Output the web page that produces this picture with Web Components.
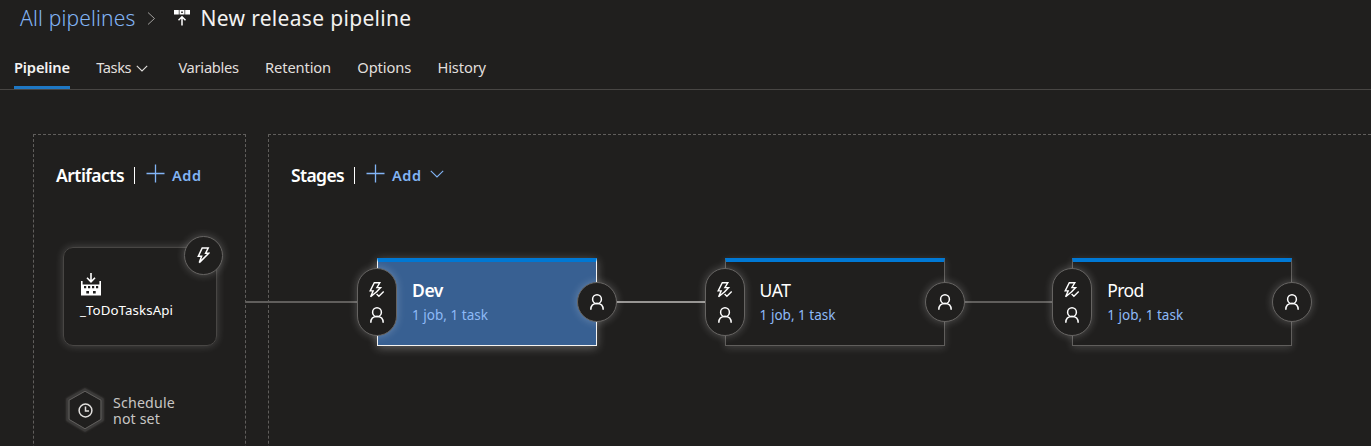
<!DOCTYPE html>
<html lang="en">
<head>
<meta charset="utf-8">
<title>New release pipeline</title>
<style>
body{margin:0;background:#201f1e;color:#fff;overflow:hidden;font-family:"Noto Sans","Open Sans",sans-serif}
</style>
</head>
<body>
<release-page></release-page>
<script>
const ICONS = {
  chevronRight: [9,13,'<path d="M1 .5 7.5 6.5 1 12.5" stroke-width="1"/>'],
  chevronDown: [12,7,'<path d="M.8 .8 6 6 11.200 .8" stroke-width="1.1"/>'],
  chevronDownWide: [14,8,'<path d="M.8 .8 7 7 13.200 .8" stroke-width="1.1"/>'],
  plus: [19,19,'<path d="M9.500 .5V18.500M.5 9.500H18.500" stroke-width="1.300"/>'],
  release: [16,16,'<path fill="currentColor" stroke="none" fill-rule="evenodd" d="M0 0H4.800V4.500H0ZM5.500 0H10.500V4.500H5.500ZM7.200 1.500V3.100H8.800V1.500ZM11.200 0H16V4.500H11.200Z"/><path d="M8 15.500V7M4.500 10.300 8 6.800 11.500 10.300" stroke-width="1.500"/>'],
  build: [20,23,'<path fill="currentColor" stroke="none" fill-rule="evenodd" d="M0 8H1.600V11.500H18.400V8H20V22.500H0ZM3 13V15.300H5.200V13ZM7 13V15.300H9.200V13ZM11 13V15.300H13.200V13ZM15 13V15.300H17.200V13ZM5.300 18V20.600H8V18ZM12 18V20.600H14.700V18Z"/><path d="M10 0V8.500M6 4.800 10 8.800 14 4.800" stroke-width="1.600"/>'],
  bolt: [13,17,'<path d="M5.200 1H11.200L8.600 6.200H11.800L2.300 15.600 4.600 9.300H1.300Z" stroke-width="1.500"/>'],
  boltCheck: [16,16,'<path d="M8.300 9.200 1.600 14.800 4.200 8.900H1.200L5.300 .8H10.800L7.900 5.600H11.600L7.200 10.300M7.600 12 9.900 14.200 14.700 9.600" stroke-width="1.400"/>'],
  person: [14,16,'<circle cx="7" cy="5.200" r="4.400"/><path d="M.8 15.700C.8 11.600 3.400 9.500 7 9.500S13.200 11.600 13.200 15.700"/>'],
  clock: [15,15,'<circle cx="7.500" cy="7.500" r="6.400"/><path d="M7.500 3.500V8H11"/>'],
  hexagon: [38,44,'<path d="M19 2 36 11.500V32L19 42 2 32V11.500Z" fill="#201f1e" stroke="#3b3a39" stroke-width="3"/><path d="M19 3.200 35 12.200V31.400L19 40.800 3 31.400V12.200Z" stroke="#605e5c" stroke-width="1"/>']
};

function define(name, css, html, ready){
  const template = document.createElement('template');
  template.innerHTML = `<style>${css}</style>${html}`;
  customElements.define(name, class extends HTMLElement{
    connectedCallback(){
      if(this.shadowRoot) return;
      this.attachShadow({mode:'open'}).append(template.content.cloneNode(true));
      if(ready) ready(this, this.shadowRoot);
    }
  });
}

define('ui-icon', `:host{display:block;flex:none;line-height:0}svg{display:block;fill:none;stroke:currentColor;stroke-width:1.500}`, `<span></span>`, (el, root) => {
  const [w,h,body] = ICONS[el.getAttribute('name')];
  root.querySelector('span').innerHTML = `<svg width="${w}" height="${h}" viewBox="0 0 ${w} ${h}" aria-hidden="true">${body}</svg>`;
});

/* A label tracked so that its run is exactly as wide as its width attribute.
   It is measured after every element is in place, with its final font. */
define('fit-label', `:host{display:block;flex:none;white-space:nowrap}span{display:inline-block;vertical-align:top}`, `<span><slot></slot></span>`, (el) => {
  el.style.width = el.getAttribute('width') + 'px';
});
function fitAll(root){
  for(const el of root.querySelectorAll('*')){
    if(el.localName === 'fit-label' && el.textContent){
      const run = el.shadowRoot.querySelector('span');
      run.style.letterSpacing = (+el.getAttribute('width') - run.getBoundingClientRect().width) / el.textContent.length + 'px';
    }
    if(el.shadowRoot) fitAll(el.shadowRoot);
  }
}

define('crumb-bar', `:host{display:flex;height:38px;padding-left:20px;box-sizing:border-box;align-items:flex-start;font-size:21px;line-height:27px}
fit-label{margin-top:5px}.root{color:#82b4f5;font-weight:300}.sep{color:#a19f9d;margin:12px 19px 0 11px}.kind{margin:10px 11px 0 -1px}.title{color:#f3f2f1}`,
`<fit-label class="root" width="115.5">All pipelines</fit-label><ui-icon class="sep" name="chevronRight"></ui-icon><ui-icon class="kind" name="release"></ui-icon><fit-label class="title" width="211">New release pipeline</fit-label>`);

define('tab-item', `:host{display:flex;height:51px;box-sizing:border-box;padding-top:19px;font-size:14.700px;line-height:20px;color:#e1dfdd;border-bottom:3px solid transparent}
:host([selected]){border-color:#1f78c4;font-weight:600;color:#f3f2f1}`, `<slot></slot>`);

define('tab-bar', `:host{display:flex;gap:26.200px;height:52px;box-sizing:border-box;padding-left:14px;border-bottom:1px solid #484644}`,
`<tab-item selected><fit-label width="56">Pipeline</fit-label></tab-item>
<tab-item><fit-label width="35">Tasks</fit-label><ui-icon name="chevronDown" style="margin:8px 0 0 5px"></ui-icon></tab-item>
<tab-item style="margin-left:4px"><fit-label width="60.5">Variables</fit-label></tab-item>
<tab-item><fit-label width="66">Retention</fit-label></tab-item>
<tab-item><fit-label width="54">Options</fit-label></tab-item>
<tab-item><fit-label width="48.5">History</fit-label></tab-item>`);

define('panel-heading', `:host{display:flex;height:26px;align-items:flex-start}
.title{font-size:17.500px;font-weight:600;line-height:26px;margin-top:-1px}.bar{width:1px;height:17px;background:#fff;margin:4px 11px 0 10px}
ui-icon,.add{color:#82b4f5}.add{font-size:14.500px;font-weight:600;line-height:26px;margin:-1px 0 0 7px}.more{margin:7px 0 0 8px}.plus{margin-top:1px}`,
`<fit-label class="title"></fit-label><div class="bar"></div><ui-icon class="plus" name="plus"></ui-icon><fit-label class="add" width="29.5">Add</fit-label>`,
(el, root) => {
  const old = root.querySelector('.title'), title = document.createElement('fit-label');
  title.className = 'title';
  title.textContent = el.getAttribute('label');
  title.setAttribute('width', el.getAttribute('width'));
  old.replaceWith(title);
  if(el.hasAttribute('menu')){
    const more = document.createElement('ui-icon');
    more.className = 'more';
    more.setAttribute('name','chevronDownWide');
    root.append(more);
  }
});

define('round-button', `:host{display:flex;flex-direction:column;gap:9px;align-items:center;justify-content:center;width:40px;height:40px;box-sizing:border-box;border:1px solid #666462;border-radius:20px;background:#201f1e;box-shadow:0 0 9px rgba(255,255,255,.24)}`, `<slot></slot>`);

define('artifact-card', `:host{display:block;position:relative;width:154px;height:99px;box-sizing:border-box;border:1px solid #484644;border-radius:10px;padding:25px 0 0 17px;box-shadow:0 0 9px rgba(255,255,255,.2)}
round-button{position:absolute;left:120px;top:-12px;width:39px;height:39px}fit-label{font-size:13.300px;line-height:20px;margin:4px 0 0 -1px}`,
`<ui-icon name="build"></ui-icon><fit-label width="93">_ToDoTasksApi</fit-label><round-button><ui-icon name="bolt"></ui-icon></round-button>`);

define('schedule-info', `:host{display:flex;align-items:center;gap:9px;color:#c8c6c4;font-size:14.200px;line-height:16px}
.mark{display:grid;place-items:center;filter:drop-shadow(0 0 1px #484644)}.mark>*{grid-area:1/1}.clock{color:#e1dfdd}.text{padding-top:2px}`,
`<div class="mark"><ui-icon name="hexagon"></ui-icon><ui-icon class="clock" name="clock"></ui-icon></div><div class="text"><fit-label width="62">Schedule</fit-label><fit-label width="47">not set</fit-label></div>`);

define('stage-card', `:host{display:block;flex:none;position:relative;width:220px;height:88px;box-sizing:border-box;border:1px solid #605e5c;border-top:4px solid #0078d4;padding:19px 0 0 34px;box-shadow:0 2px 8px rgba(255,255,255,.16)}
:host([active]){background:#386092;border-color:#0078d4 #f3f2f1 #f3f2f1;box-shadow:0 2px 9px rgba(255,255,255,.3)}
.pre{position:absolute;left:-21px;top:6px;height:68px}.post{position:absolute;right:-21px;top:20px}
.name{font-size:17.500px;line-height:24px;margin-top:-3px}:host([active]) .name{font-weight:600}
.jobs{font-size:13.500px;line-height:20px;margin-top:3px;color:#8ebaf7}`,
`<div class="name"></div><fit-label class="jobs" width="76">1 job, 1 task</fit-label>
<round-button class="pre"><ui-icon name="boltCheck"></ui-icon><ui-icon name="person"></ui-icon></round-button>
<round-button class="post"><ui-icon name="person"></ui-icon></round-button>`,
(el, root) => {
  const label = document.createElement('fit-label');
  label.setAttribute('width', el.getAttribute('width'));
  label.textContent = el.getAttribute('label');
  root.querySelector('.name').append(label);
});

define('flow-line', `:host{display:block;flex:none;align-self:center;width:127.600px;height:1.500px;background:#605e5c}:host([strong]){height:2px;background:#979593}`, ``);

define('pipeline-canvas', `:host{display:flex;gap:22px;padding:44px 0 0 33px;height:356px;box-sizing:border-box}
section{height:360px;box-sizing:border-box;border:1px dashed #605e5c;padding:28px 0 0 22px}
.artifacts{width:213px;flex:none}.stages{flex:1;min-width:0;border-right:0}
artifact-card{margin:58px 0 0 7px}schedule-info{margin:42px 0 0 10px}
.track{display:flex;margin:69px 0 0 -45px}`,
`<section class="artifacts"><panel-heading label="Artifacts" width="68"></panel-heading><artifact-card></artifact-card><schedule-info></schedule-info></section>
<section class="stages"><panel-heading label="Stages" width="53" menu></panel-heading>
<div class="track"><flow-line style="width:131px"></flow-line><stage-card active label="Dev" width="31"></stage-card><flow-line strong></flow-line><stage-card label="UAT" width="31"></stage-card><flow-line></flow-line><stage-card label="Prod" width="36.5"></stage-card></div></section>`);

define('release-page', `:host{display:block;height:446px;overflow:hidden}`, `<crumb-bar></crumb-bar><tab-bar></tab-bar><pipeline-canvas></pipeline-canvas>`);
fitAll(document);
</script>
</body>
</html>
